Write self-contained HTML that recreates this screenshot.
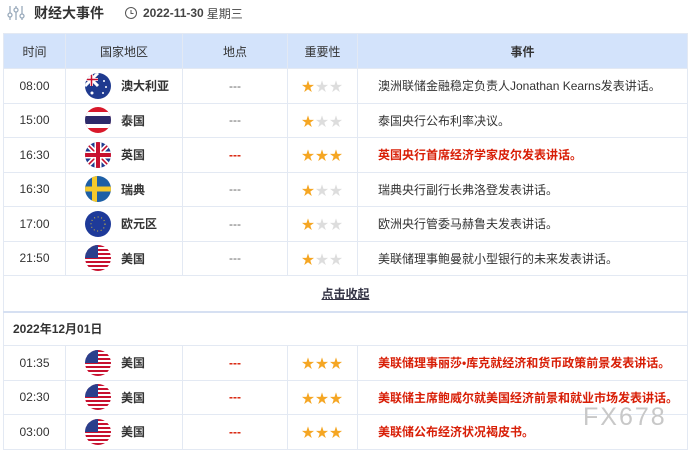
<!DOCTYPE html><html><head><meta charset="utf-8"><style>
*{margin:0;padding:0;box-sizing:border-box}
body{width:688px;height:447px;overflow:hidden;background:#fff;font-family:"Liberation Sans","Noto Sans CJK SC",sans-serif;font-size:12px;color:#333;position:relative}
.top{position:absolute;left:6px;top:4px;height:18px;display:flex;align-items:center}
.title{font-weight:bold;font-size:14px;color:#333;margin-left:8px}
.date{margin-left:20px;font-size:12px;font-weight:bold;color:#444;display:flex;align-items:center}
table{position:absolute;left:3px;top:33px;width:685px;border-collapse:collapse;table-layout:fixed}
td,th{border:1px solid #e3e9f3;text-align:center;height:34.5px;padding:0;font-weight:normal}
th{background:#d3e3fb;color:#333;font-size:12px;height:35px}
td.ev{text-align:left;padding-left:20px;font-size:12px}
.red{color:#d81e06;font-weight:bold}
.c{display:flex;align-items:center;padding-left:19px}
.c svg{flex:none;margin-right:10px}
.c span{font-weight:bold;font-size:12px}
.st{color:#ddd;font-size:13px;letter-spacing:1px}
.st b{color:#f5a623;font-weight:normal}
.dash{color:#666}
.rd{color:#d81e06;font-weight:bold}
.wm{position:absolute;left:583px;top:403px;font-size:25px;color:#c8c8c8;letter-spacing:2px;font-family:"Liberation Sans",sans-serif}
</style></head><body>
<div class="top">
<svg width="20" height="18" viewBox="0 0 20 18"><g stroke="#9ab" fill="none" stroke-width="1.3"><line x1="4" y1="2" x2="4" y2="16"/><line x1="10" y1="2" x2="10" y2="16"/><line x1="16" y1="2" x2="16" y2="16"/><circle cx="4" cy="11" r="2" fill="#fff"/><circle cx="10" cy="6" r="2" fill="#fff"/><circle cx="16" cy="12" r="2" fill="#fff"/></g></svg>
<span class="title">财经大事件</span>
<span class="date"><svg width="14" height="14" viewBox="0 0 14 14" style="margin-right:5px"><circle cx="7" cy="7" r="5.5" stroke="#555" fill="none"/><path d="M7 4v3.5h2.5" stroke="#555" fill="none"/></svg>2022-11-30 <span style="font-weight:normal;margin-left:3px">星期三</span></span>
</div>
<svg width="0" height="0" style="position:absolute"><defs>
<clipPath id="cp"><circle cx="13" cy="13" r="13"/></clipPath>
<g id="us"><g clip-path="url(#cp)"><rect width="26" height="26" fill="#fff"/><g fill="#c8102e"><rect y="0" width="26" height="2"/><rect y="4" width="26" height="2"/><rect y="8" width="26" height="2"/><rect y="12" width="26" height="2"/><rect y="16" width="26" height="2"/><rect y="20" width="26" height="2"/><rect y="24" width="26" height="2"/></g><rect width="13" height="13" fill="#2b3f8c"/></g></g>
</defs></svg>
<table>
<colgroup><col style="width:62px"><col style="width:117px"><col style="width:105px"><col style="width:70px"><col></colgroup>
<tr><th>时间</th><th>国家地区</th><th>地点</th><th>重要性</th><th style="font-weight:bold">事件</th></tr>
<tr><td>08:00</td><td><div class="c"><svg width="26" height="26"><g clip-path="url(#cp)"><rect width="26" height="26" fill="#1f3a8f"/><path d="M0 0L13 13M13 0L0 13" stroke="#fff" stroke-width="3"/><path d="M6.5 0v13M0 6.5h13" stroke="#fff" stroke-width="3"/><path d="M6.5 0v13M0 6.5h13" stroke="#c8102e" stroke-width="1.5"/><circle cx="19" cy="8" r="1" fill="#fff"/><circle cx="21" cy="14" r="1" fill="#fff"/><circle cx="18" cy="20" r="1" fill="#fff"/><circle cx="7" cy="20" r="1.5" fill="#fff"/></g></svg><span>澳大利亚</span></div></td><td class="dash">---</td><td class="st"><b>★</b>★★</td><td class="ev">澳洲联储金融稳定负责人Jonathan Kearns发表讲话。</td></tr>
<tr><td>15:00</td><td><div class="c"><svg width="26" height="26"><g clip-path="url(#cp)"><rect width="26" height="26" fill="#d8192b"/><rect y="5" width="26" height="16" fill="#fff"/><rect y="9" width="26" height="8" fill="#2d2a6a"/></g></svg><span>泰国</span></div></td><td class="dash">---</td><td class="st"><b>★</b>★★</td><td class="ev">泰国央行公布利率决议。</td></tr>
<tr><td>16:30</td><td><div class="c"><svg width="26" height="26"><g clip-path="url(#cp)"><rect width="26" height="26" fill="#1f3a8f"/><path d="M0 0L26 26M26 0L0 26" stroke="#fff" stroke-width="5"/><path d="M0 0L26 26M26 0L0 26" stroke="#c8102e" stroke-width="1.6"/><path d="M13 0v26M0 13h26" stroke="#fff" stroke-width="7"/><path d="M13 0v26M0 13h26" stroke="#c8102e" stroke-width="4"/></g></svg><span>英国</span></div></td><td class="rd">---</td><td class="st"><b>★★★</b></td><td class="ev red">英国央行首席经济学家皮尔发表讲话。</td></tr>
<tr><td>16:30</td><td><div class="c"><svg width="26" height="26"><g clip-path="url(#cp)"><rect width="26" height="26" fill="#1d5fa6"/><rect x="7" width="5" height="26" fill="#f4c92c"/><rect y="10.5" width="26" height="5" fill="#f4c92c"/></g></svg><span>瑞典</span></div></td><td class="dash">---</td><td class="st"><b>★</b>★★</td><td class="ev">瑞典央行副行长弗洛登发表讲话。</td></tr>
<tr><td>17:00</td><td><div class="c"><svg width="26" height="26"><circle cx="13" cy="13" r="13" fill="#1e3a99"/><circle cx="13" cy="13" r="7" fill="none" stroke="#d9c13a" stroke-width="1" stroke-dasharray="1 2.6"/></svg><span>欧元区</span></div></td><td class="dash">---</td><td class="st"><b>★</b>★★</td><td class="ev">欧洲央行管委马赫鲁夫发表讲话。</td></tr>
<tr><td>21:50</td><td><div class="c"><svg width="26" height="26"><use href="#us"/></svg><span>美国</span></div></td><td class="dash">---</td><td class="st"><b>★</b>★★</td><td class="ev">美联储理事鲍曼就小型银行的未来发表讲话。</td></tr>
<tr><td colspan="5" style="height:36px;border-bottom:2px solid #d6e0f2"><u style="font-weight:bold;color:#334">点击收起</u></td></tr>
<tr><td colspan="5" style="text-align:left;padding-left:9px;font-weight:bold;height:34px">2022年12月01日</td></tr>
<tr><td>01:35</td><td><div class="c"><svg width="26" height="26"><use href="#us"/></svg><span>美国</span></div></td><td class="rd">---</td><td class="st"><b>★★★</b></td><td class="ev red">美联储理事丽莎•库克就经济和货币政策前景发表讲话。</td></tr>
<tr><td>02:30</td><td><div class="c"><svg width="26" height="26"><use href="#us"/></svg><span>美国</span></div></td><td class="rd">---</td><td class="st"><b>★★★</b></td><td class="ev red">美联储主席鲍威尔就美国经济前景和就业市场发表讲话。</td></tr>
<tr><td>03:00</td><td><div class="c"><svg width="26" height="26"><use href="#us"/></svg><span>美国</span></div></td><td class="rd">---</td><td class="st"><b>★★★</b></td><td class="ev red">美联储公布经济状况褐皮书。</td></tr>
</table>
<div class="wm">FX678</div>
</body></html>
